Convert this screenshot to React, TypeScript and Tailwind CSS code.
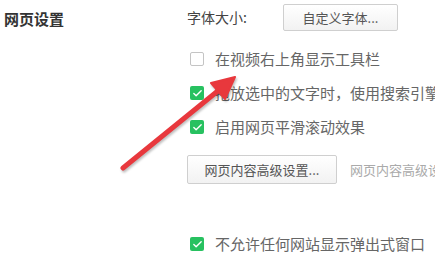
import { Check } from "lucide-react"

const font = { fontFamily: '"Noto Sans CJK SC", "Noto Sans", sans-serif' }

function Box({ checked }: { checked?: boolean }) {
  return checked ? (
    <span className="flex h-[14px] w-[14px] items-center justify-center rounded-[2px] bg-[#27c160]">
      <Check className="h-[11px] w-[11px] text-white" strokeWidth={3} />
    </span>
  ) : (
    <span className="h-[14px] w-[14px] rounded-[2px] border border-[#c4c4c4] bg-white" />
  )
}

function Option({ checked, label }: { checked?: boolean; label: string }) {
  return (
    <div className="flex h-[34px] items-center whitespace-nowrap pl-[3px]">
      <Box checked={checked} />
      <span className="ml-[11px] text-[15px] leading-5 text-[#666]">{label}</span>
    </div>
  )
}

function Arrow() {
  return (
    <svg
      className="pointer-events-none absolute left-0 top-0 drop-shadow-[1px_2px_1px_rgba(0,0,0,0.25)]"
      width="435"
      height="261"
    >
      <line x1="123" y1="168" x2="219" y2="90" stroke="#e8383d" strokeWidth="5" strokeLinecap="round" />
      <polygon points="235,77 211,83 225,99" fill="#e8383d" stroke="#e8383d" strokeWidth="2" strokeLinejoin="round" />
    </svg>
  )
}

export default function App() {
  return (
    <div className="relative flex h-[261px] w-[435px] overflow-hidden bg-white" style={font}>
      <div className="w-[187px] shrink-0 pl-[4px] pt-[9px]">
        <h2 className="text-[15px] font-bold leading-5 text-[#333]">网页设置</h2>
      </div>

      <div className="flex-1 pt-[4px]">
        <div className="flex h-[27px] items-center whitespace-nowrap">
          <span className="w-[96px] text-[14px] text-[#444]">字体大小:</span>
          <button className="h-[27px] w-[115px] rounded-[2px] border border-[#cfcfcf] bg-gradient-to-b from-white to-[#f2f2f2] text-[13px] text-[#555]">
            自定义字体...
          </button>
        </div>

        <div className="mt-[11px]">
          <Option label="在视频右上角显示工具栏" />
          <Option checked label="拖放选中的文字时，使用搜索引擎打开" />
          <Option checked label="启用网页平滑滚动效果" />
        </div>

        <div className="mt-[11px] flex h-[29px] items-center whitespace-nowrap">
          <button className="h-[29px] w-[150px] rounded-[2px] border border-[#cfcfcf] bg-gradient-to-b from-white to-[#f2f2f2] text-[13px] text-[#555]">
            网页内容高级设置...
          </button>
          <span className="ml-[13px] text-[13px] text-[#aaa]">网页内容高级设置</span>
        </div>

        <div className="mt-[43px]">
          <Option checked label="不允许任何网站显示弹出式窗口" />
        </div>
      </div>

      <Arrow />
    </div>
  )
}
